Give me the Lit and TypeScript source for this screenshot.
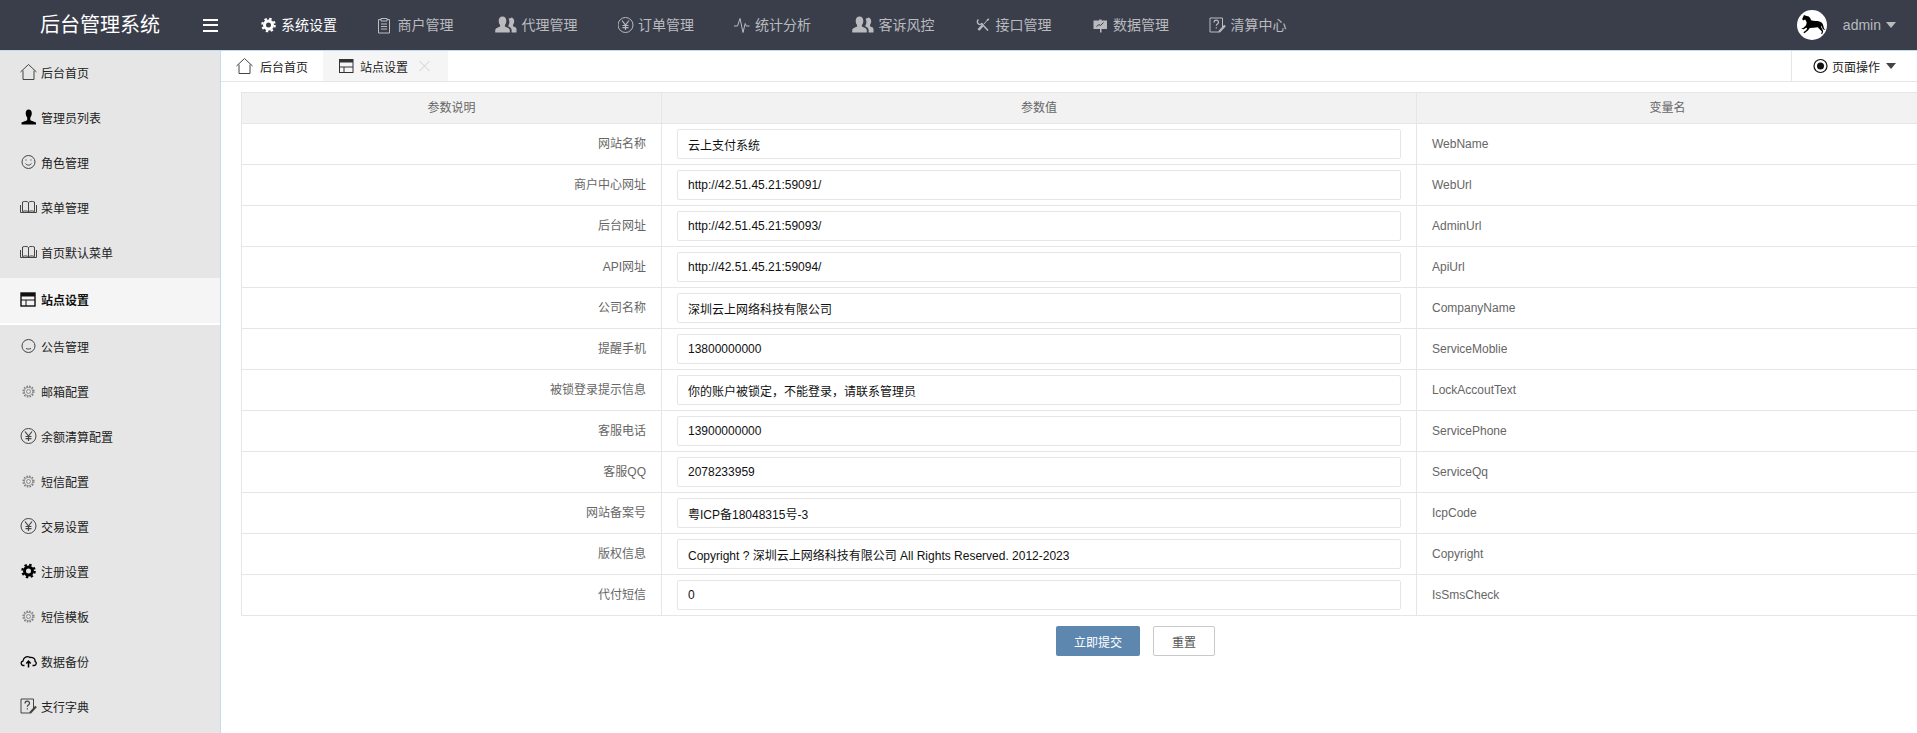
import { LitElement, html, css, svg } from "lit";
import { customElement } from "lit/decorators.js";

const box = (w: number, body: unknown, cls = "") =>
  html`<svg class="ic ${cls}" width=${w} height="20" viewBox="0 0 ${w} 20" fill="none" stroke="currentColor" stroke-width="1">${body}</svg>`;

const gearSolid = svg`<circle cx="7.5" cy="10" r="4" stroke-width="3"/><circle cx="7.5" cy="10" r="6.2" stroke-width="2.2" stroke-dasharray="2.4 2.47"/>`;
const gearThin = svg`<circle cx="8.500" cy="10.500" r="2" stroke-width=".8"/><circle cx="8.500" cy="10.500" r="4.200" stroke-width=".8"/><circle cx="8.500" cy="10.500" r="5.400" stroke-width="1.400" stroke-dasharray="1.500 1.330"/>`;
const clip = svg`<path d="M4 4.5H1.5v13.5h11V4.5H10M4 3.5h6v2.5H4zM4 9h6M4 11.5h6M4 14h6"/>`;
const users = svg`<g transform="translate(1 0)" fill="currentColor" stroke="none"><path d="M7.5 1.500c2.600 0 3.800 2 3.800 4.500 0 1.800-.7 3.200-1.400 4.100v1.500l3.300 1.500c1 .5 1.600 1.200 1.600 2.600v1.800H.2v-1.800c0-1.400.6-2.100 1.600-2.600l3.300-1.500v-1.500c-.7-.9-1.400-2.300-1.400-4.100 0-2.500 1.200-4.500 3.800-4.500z"/><path d="M16 2.500c2 0 3.200 1.800 3.200 3.800 0 1.600-.6 2.800-1.200 3.600v1.300l2.200 1.100c.8.400 1.300 1 1.300 2.300v3h-4.900v-2.200c0-1.900-.9-2.900-2.100-3.500l-1.400-.7v-.2c.7-.9 1.300-2.400 1.300-4.200 0-1.200-.3-2.300-.8-3.100 .7-.5 1.500-.8 2.400-.8z"/></g>`;
const yen = (cx = 8) => svg`<circle cx=${cx} cy="10" r="7.5"/><path stroke-width="1.2" d="M${cx - 3.5} 5.5L${cx} 10l3.5-4.5M${cx} 10v5M${cx - 3} 10.5h6M${cx - 3} 12.7h6"/>`;
const pulse = svg`<path d="M0 11h3.500l2.500-7.500 3 14 2.200-9 1.100 2.500h3.200"/>`;
const tools = svg`<path stroke-width="1.500" d="M6.500 8.500L13 15.500"/><path stroke-width="1.400" d="M3.500 4.500a2.700 2.700 0 1 0 3.800 3.700"/><path d="M12.500 5L8.500 9.500"/><path stroke-width="2.600" d="M7.500 10.500L3.500 15"/><path stroke-width="1.600" d="M12 5.500L13.800 3.800"/>`;
const board = svg`<g transform="translate(1 0)"><path fill="currentColor" stroke="none" d="M6 4.500h2.500v1H14v8.500H8.500v3.500h-1.500V14H.5V5.500H6z"/><path stroke="#3a3e4b" d="M3.500 11.500l2.500-2 1.500 1 3-3"/></g>`;
const docq = svg`<path d="M13.500 13v-10H1v14h9"/><path stroke-width="1.200" d="M5 7.500c0-3 4.500-3 4.500-.3 0 1.800-2.200 1.800-2.200 3.600M7.300 12.300v1.200"/><path stroke-width="2.200" d="M10 17l6-6.500"/>`;
const home = svg`<path d="M.5 10L8.500 2.500 16.500 10M3 8.500V17.500H14V8.500"/>`;
const person = svg`<path fill="currentColor" stroke="none" d="M8.500 2.500c2.200 0 3.300 1.700 3.300 3.800 0 1.900-.8 3.500-1.500 4.200v2.700l5.700 2.300v2H1.500v-2l5.700-2.300v-2.700c-.7-.7-1.500-2.300-1.500-4.200 0-2.100 1.100-3.800 2.800-3.800z"/>`;
const smile = svg`<circle cx="8.500" cy="10" r="6.500"/><path d="M5.500 11.500c1.500 2.200 4.500 2.200 6 0"/><path stroke-width="1.100" d="M6 7.500v1M11 7.500v1"/>`;
const frown = svg`<circle cx="8.500" cy="10" r="6.500"/><path d="M6 12.500c1.500 .7 3.500 .7 5 0"/>`;
const book = svg`<path d="M.5 15.500V8M16.500 15.500V8M2.500 14.500V5c2.500-1 5-.7 6 .5 1-1.200 3.500-1.500 6-.5v9.500c-2.500-1-5-.7-6 .5-1-1.200-3.500-1.500-6-.5zM8.500 5.500V15M.5 15.500h16"/>`;
const windowSolid = svg`<rect x="1" y="4" width="14" height="13" stroke-width="1.400"/><rect x="1" y="4" width="14" height="3.500" fill="currentColor" stroke="none"/><path d="M1 11h14M6 11v6" stroke-width="1"/>`;
const cloud = svg`<path stroke-width="1.300" d="M4.500 14.500H3.500c-2.800 0-3.200-3.800-.5-4.500C3.500 6.500 7 4.500 10 6.500c3-.5 5.500 1.500 5 3.800 2 .7 1.500 4.200-.8 4.200H12.500"/><path stroke-width="1.500" d="M8.500 16.500V10.500M6.300 12.500l2.200-2.400 2.200 2.400"/>`;
const radio = svg`<circle cx="7.500" cy="10" r="6.500" stroke-width="1.200"/><circle cx="7.500" cy="10" r="3.500" fill="currentColor" stroke="none"/>`;
const winThin = svg`<rect x=".5" y="3.500" width="13.500" height="13" /><rect x=".5" y="3.500" width="13.500" height="3" fill="currentColor" stroke="none"/><path d="M.5 11H14M5 11v5.500" />`;

const navItems = [
  { w: 20, icon: gearSolid, label: "系统设置", on: true },
  { w: 20.5, icon: clip, label: "商户管理" },
  { w: 28, icon: users, label: "代理管理" },
  { w: 20.5, icon: yen(7.5), label: "订单管理" },
  { w: 21, icon: pulse, label: "统计分析" },
  { w: 27.5, icon: users, label: "客诉风控" },
  { w: 21, icon: tools, label: "接口管理" },
  { w: 21.5, icon: board, label: "数据管理" },
  { w: 21.5, icon: docq, label: "清算中心" },
];

const sideItems = [
  { icon: home, label: "后台首页" },
  { icon: person, label: "管理员列表", tone: "dark" },
  { icon: smile, label: "角色管理" },
  { icon: book, label: "菜单管理" },
  { icon: book, label: "首页默认菜单" },
  { icon: windowSolid, label: "站点设置", on: true },
  { icon: frown, label: "公告管理" },
  { icon: gearThin, label: "邮箱配置", tone: "lite" },
  { icon: yen(8.5), label: "余额清算配置" },
  { icon: gearThin, label: "短信配置", tone: "lite" },
  { icon: yen(8.5), label: "交易设置" },
  { icon: svg`<g transform="translate(1 0)">${gearSolid}</g>`, label: "注册设置", tone: "dark" },
  { icon: gearThin, label: "短信模板", tone: "lite" },
  { icon: cloud, label: "数据备份", tone: "dark" },
  { icon: docq, label: "支行字典" },
];

const rows = [
  ["网站名称", "云上支付系统", "WebName"],
  ["商户中心网址", "http://42.51.45.21:59091/", "WebUrl"],
  ["后台网址", "http://42.51.45.21:59093/", "AdminUrl"],
  ["API网址", "http://42.51.45.21:59094/", "ApiUrl"],
  ["公司名称", "深圳云上网络科技有限公司", "CompanyName"],
  ["提醒手机", "13800000000", "ServiceMoblie"],
  ["被锁登录提示信息", "你的账户被锁定，不能登录，请联系管理员", "LockAccoutText"],
  ["客服电话", "13900000000", "ServicePhone"],
  ["客服QQ", "2078233959", "ServiceQq"],
  ["网站备案号", "粤ICP备18048315号-3", "IcpCode"],
  ["版权信息", "Copyright ? 深圳云上网络科技有限公司 All Rights Reserved. 2012-2023", "Copyright"],
  ["代付短信", "0", "IsSmsCheck"],
];

@customElement("app-root")
export class AppRoot extends LitElement {
  static styles = css`
    :host {
      display: flex;
      flex-direction: column;
      height: 733px;
      width: 1917px;
      overflow: hidden;
      background: #fff;
      font-family: "Liberation Sans", "Noto Sans CJK SC", sans-serif;
      font-size: 12px;
      color: #333;
    }
    .ic { flex: none; display: block; }
    header {
      flex: none;
      height: 50px;
      box-sizing: content-box;
      background: #3a3e4b;
      border-bottom: 1px solid #c2dcef;
      display: flex;
      align-items: center;
      color: #b9bbbf;
    }
    .logo {
      width: 163px;
      padding-left: 40px;
      color: #fff;
      font-size: 20px;
      line-height: 50px;
      white-space: nowrap;
    }
    .burger {
      width: 15px;
      height: 13px;
      margin-right: 23px;
      display: flex;
      flex-direction: column;
      justify-content: space-between;
    }
    .burger i { display: block; height: 2px; background: #fff; }
    nav { display: flex; }
    .nav-item {
      display: flex;
      align-items: center;
      padding: 0 20px;
      font-size: 14px;
      line-height: 50px;
      white-space: nowrap;
    }
    .nav-item.on { color: #fff; }
    .user {
      margin-left: auto;
      padding-right: 21px;
      display: flex;
      align-items: center;
      font-size: 14px;
    }
    .avatar { width: 30px; height: 30px; display: block; margin-right: 16px; }
    .caret {
      width: 0;
      height: 0;
      margin-left: 5px;
      border: 5.500px solid transparent;
      border-top: 6px solid currentColor;
      border-bottom: 0;
    }
    .body { flex: 1; display: flex; min-height: 0; }
    aside {
      flex: none;
      width: 220px;
      background: #e6e6e6;
      border-right: 1px solid #c2dcef;
    }
    .side-item {
      height: 45px;
      box-sizing: border-box;
      padding: 0 0 2px 20px;
      display: flex;
      align-items: center;
      color: #222;
      white-space: nowrap;
    }
    .side-item .ic { margin-right: 4px; color: #444; transform: translateY(-1px); }
    .side-item .ic.dark { color: #000; }
    .side-item .ic.lite { color: #777; }
    .side-item.on {
      margin-top: 2px;
      height: 47px;
      background: #f5f5f5;
      border-bottom: 2px solid #fff;
      font-weight: 700;
      color: #111;
    }
    .side-item.on .ic { color: #111; }
    main { flex: 1; min-width: 0; overflow: hidden; }
    .tabs {
      height: 30px;
      box-sizing: content-box;
      border-bottom: 1px solid #e6e6e6;
      display: flex;
      align-items: stretch;
      color: #222;
    }
    .tab {
      display: flex;
      align-items: center;
      white-space: nowrap;
    }
    .tab.first { width: 87px; padding-left: 15px; }
    .tab.first .ic { color: #444; margin-right: 7px; }
    .tab.cur { width: 109px; padding-left: 16px; background: #f5f5f5; }
    .tab.cur .ic { color: #333; margin-right: 6px; }
    .tab.cur .ic.close { margin: 0 0 0 10px; color: #cfcfcf; }
    .ops {
      margin-left: auto;
      width: 104px;
      padding-left: 21px;
      border-left: 1px solid #e6e6e6;
      display: flex;
      align-items: center;
      white-space: nowrap;
      color: #222;
    }
    .ops .ic { margin-right: 4px; color: #111; }
    .ops .caret { margin-left: 6px; color: #444; }
    .content { padding: 10px 0 0 20px; }
    table {
      width: 1677px;
      table-layout: fixed;
      border-collapse: collapse;
      color: #666;
    }
    col.a { width: 420px; }
    col.b { width: 755px; }
    col.c { width: 502px; }
    th, td {
      border: 1px solid #e6e6e6;
      padding: 0 15px;
      font-weight: 400;
      line-height: 20px;
    }
    th { height: 30px; background: #f2f2f2; text-align: center; }
    td { height: 40px; }
    td.lab { text-align: right; }
    input {
      display: block;
      width: 100%;
      height: 30px;
      box-sizing: border-box;
      border: 1px solid #e6e6e6;
      border-radius: 2px;
      padding: 0 10px;
      margin: 0;
      background: #fff;
      color: #111;
      font: inherit;
      outline: none;
    }
    .actions { display: flex; gap: 13px; padding: 10px 0 0 815px; }
    button {
      height: 30px;
      box-sizing: border-box;
      border-radius: 2px;
      padding: 0;
      font: inherit;
    }
    .submit { width: 84px; background: #5e87b0; border: 0; color: #fff; }
    .reset { width: 62px; background: #fff; border: 1px solid #c9c9c9; color: #555; }
  `;

  render() {
    return html`
      <header>
        <div class="logo">后台管理系统</div>
        <div class="burger"><i></i><i></i><i></i></div>
        <nav>
          ${navItems.map(
            (n) => html`<div class="nav-item ${n.on ? "on" : ""}">${box(n.w, n.icon)}<span>${n.label}</span></div>`
          )}
        </nav>
        <div class="user">
          <svg class="avatar" viewBox="0 0 30 30">
            <circle cx="15" cy="15" r="15" fill="#fff" />
            <path
              fill="#000"
              d="M7 5l2.500 1 1.500 .2c1.500 .5 2.500 2 3 4 3 1 6 .5 8.500 1.200 2.500 .8 3.500 2.500 4 5 .3 2 1 3 2 3.600-1.700 .2-3-1-3.500-3l-.8-1.800c-.3 1.600.3 2.800 1 3.800l1 2.200-1 3-1-.4.700-2.300-3-3-1-1.300-4.500 .5-3.500 .3-2 2.500-3.500 2.700-1-1 3-2.200 .8-2-1-.3-2.500 1.500-2.700-.5 2.300-.8 2.800-2.700 .6-2.700-1.500-3-2.200 1-.8-1.500z"
            />
          </svg>
          <span>admin</span><i class="caret"></i>
        </div>
      </header>
      <div class="body">
        <aside>
          ${sideItems.map(
            (s) =>
              html`<div class="side-item ${s.on ? "on" : ""}">${box(17, s.icon, s.tone ?? "")}<span>${s.label}</span></div>`
          )}
        </aside>
        <main>
          <div class="tabs">
            <div class="tab first">${box(17, home)}<span>后台首页</span></div>
            <div class="tab cur">
              ${box(15, winThin)}<span>站点设置</span>
              ${box(13, svg`<path d="M1.500 5L11.500 15M11.500 5L1.500 15"/>`, "close")}
            </div>
            <div class="ops">${box(15, radio)}<span>页面操作</span><i class="caret"></i></div>
          </div>
          <div class="content">
            <table>
              <colgroup><col class="a" /><col class="b" /><col class="c" /></colgroup>
              <thead>
                <tr><th>参数说明</th><th>参数值</th><th>变量名</th></tr>
              </thead>
              <tbody>
                ${rows.map(
                  (r) => html`<tr>
                    <td class="lab">${r[0]}</td>
                    <td><input type="text" .value=${r[1]} /></td>
                    <td>${r[2]}</td>
                  </tr>`
                )}
              </tbody>
            </table>
            <div class="actions">
              <button class="submit">立即提交</button>
              <button class="reset">重置</button>
            </div>
          </div>
        </main>
      </div>
    `;
  }
}
